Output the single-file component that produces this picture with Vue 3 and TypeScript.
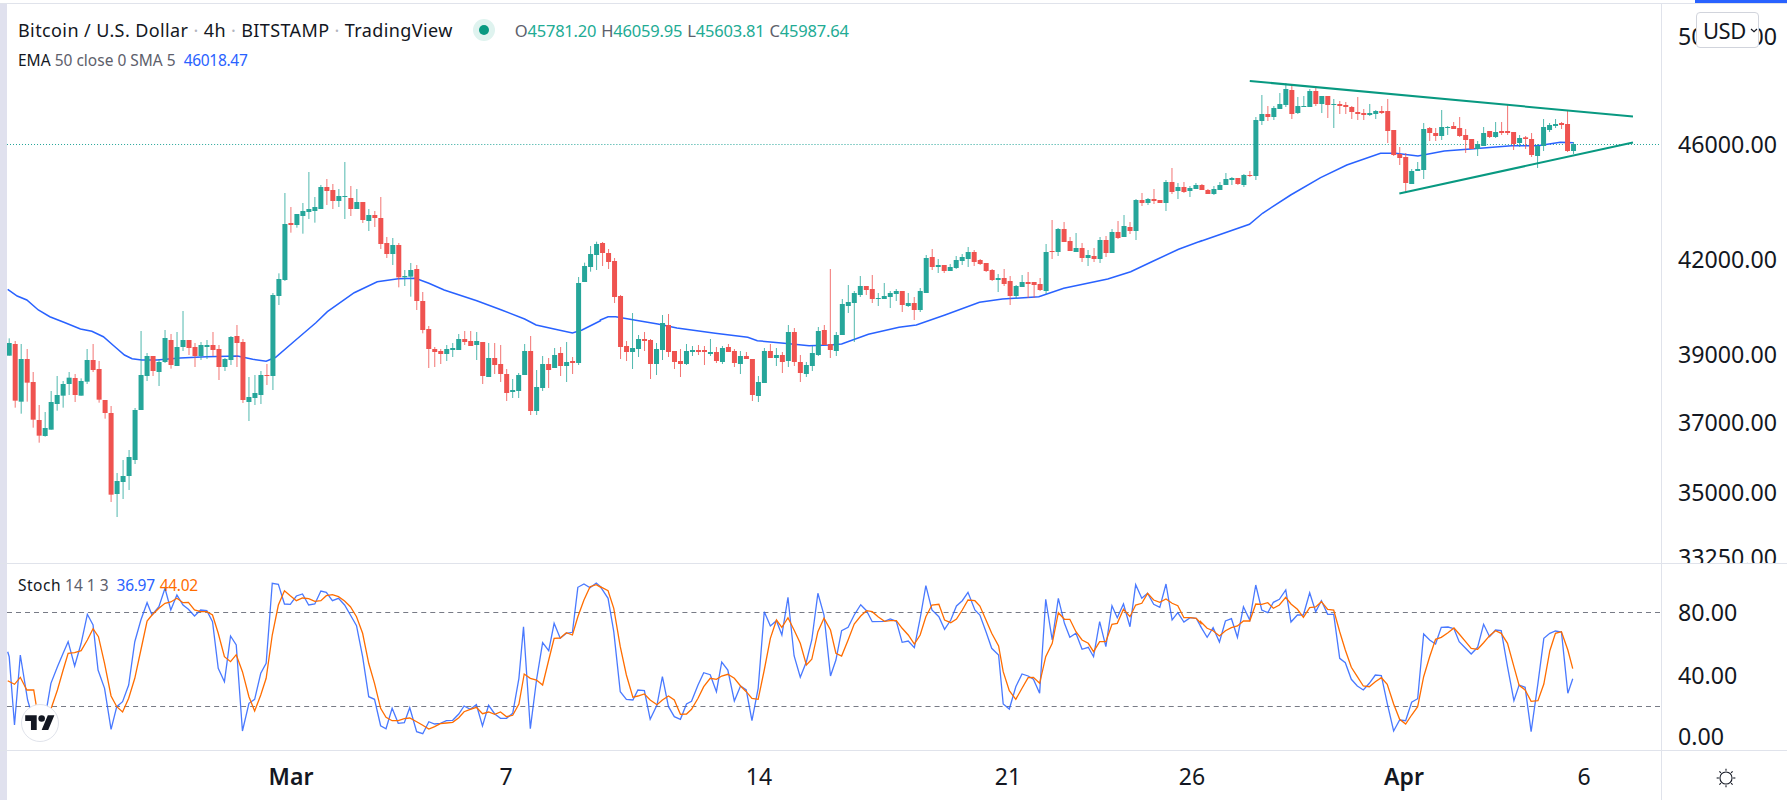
<script setup lang="ts">
interface Candle { x: number; up: boolean; top: number; h: number; wt: number; wh: number }
interface Seg { off: number; s: string }

const segs: Seg[] = [
  { off: 810, s: 'g 219 257 205 257;r 222 392 213 413;g 267 395 222 431;r 267 338 237 395;r 336 449 306 473;r 450 497 405 518;g 474 498 426 500;g 396 479 363 479;g 375 402 318 422;g 342 377 333 413;g 323 342 306 375;r 324 375 312 396;g 333 377 325 377;g 270 335 237 342;r 270 300 222 306;r 297 389 273 398;r 390 429 390 446;r 429 674 408 696;g 633 672 609 741;g 618 636 570 687;g 561 618 540 660;g 420 570 414 582;g 315 420 183 420;g 258 318 249 333;r 258 303 258 318;g 276 306 267 348;g 204 276 180 279;r 210 285 192 296;g 231 288 186 288;g 210 231 123 243;r 210 234 210 255;r 231 258 219 291;g 225 258 216 270;g 225 231 210 267;r 225 240 186 258;r 237 291 225 330;g 267 291 264 303;g 201 270 198 285;r 198 219 165 291;r 216 390 207 399;g 381 396 321 453;g 369 384 315 405;g 315 375 303 402;r 315 318 282 345;g 75 318 69 360;g 27 78 10 105' },
  { off: 0, s: 'g 672 840 579 843;r 669 675 621 698;g 642 675 642 683;g 633 648 609 701;g 627 636 516 657;g 621 633 591 668;g 561 627 555 627;r 561 573 537 615;r 570 603 552 627;g 588 603 567 621;g 588 591 486 657;r 594 627 558 648;g 606 627 567 627;r 606 660 606 669;g 645 663 627 693;r 645 654 633 681;r 654 732 591 747;r 729 762 711 774;g 735 762 714 795;r 735 832 729 862;g 828 832 810 858;g 810 830 789 890;r 807 903 795 930' },
  { off: 810, s: 'r 93 180 66 190;r 177 237 168 294;r 237 246 231 291;r 243 252 237 282;g 237 252 225 273;g 234 240 219 261;g 207 240 192 240;r 207 216 183 225;r 213 228 183 228;g 213 225 186 270;r 216 318 216 342;g 264 321 219 321;r 264 285 219 312;r 282 312 225 336;r 312 369 297 393;g 360 366 327 384;g 315 363 309 384;g 243 315 222 315;r 243 423 198 435;g 351 423 300 435;g 282 354 258 363;r 282 300 264 354;g 255 294 234 294;r 249 288 231 318;g 276 288 216 336;r 273 279 261 312;g 39 279 21 285' },
  { off: 0, s: 'g 798 846 788 846;g 762 801 738 815;g 732 765 725 810' },
  { off: 300, s: 'r 429 459 426 498;r 459 486 447 507;r 483 591 474 609;r 588 741 585 777;r 738 756 723 783;g 744 756 639 807;g 717 747 705 771;r 717 723 696 753;r 720 792 717 837;g 747 792 729 825;g 669 750 645 780;r 675 756 642 771;r 753 786 753 807;r 783 792 747 831;g 753 792 732 795;g 750 756 738 768;r 750 756 735 765;r 750 756 738 795;g 756 762 717 768;r 756 783 741 789;g 744 786 738 792;r 741 756 732 756;r 753 789 747 801;g 768 792 753 822;r 768 777 756 777;r 777 885 777 903;g 846 888 828 906;g 753 849 744 849;r 753 774 732 774;g 765 774 744 798;r 765 786 756 819;g 696 783 675 801;r 696 786 684 798;r 786 819 765 846;g 795 822 786 831;g 759 798 738 813;g 693 765 681 768;r 690 735 675 735;r 732 750 507 774;g 705 753 696 768;g 612 705 597 705;g 606 618 555 639;g 579 609 573 726;g 558 585 528 591;r 558 570 558 585;r 567 597 525 609;g 594 597 579 618;g 588 597 549 597;g 579 591 573 624;g 573 582 567 603;r 573 615 573 636;g 609 618 579 621;r 609 630 591 660;g 573 630 564 636;g 474 579 465 579;r 471 501 447 510;g 495 501 477 519;r 495 513 495 519;g 501 513 492 513;g 480 504 468 507;g 471 483 462 495;g 456 477 441 501;r 456 486 450 498;r 480 492 477 495;r 489 513 489 516;r 510 540 507 543;g 534 540 522 576;r 534 552 507 558;r 543 588 528 615;g 558 588 555 597;g 546 561 525 561;r 546 552 516 594;r 546 555 546 594;r 552 570 534 573;g 456 573 432 582;r 453 456 360 477;g 387 456 384 468;r 387 426 366 426;r 423 453 411 453;g 444 456 399 456;r 444 474 429 486;g 465 474 450 498;r 468 477 444 486;g 420 477 411 489;r 420 459 408 471;g 396 459 387 459;r 396 414 363 417;g 378 411 345 411;r 381 393 366 402;g 300 393 297 420;r 300 309 279 318;g 297 309 294 315;r 297 303 267 312;r 300 309 300 309;g 246 309 240 333;r 246 276 204 282;g 261 273 249 297;r 261 276 246 279;g 264 273 258 291;g 255 267 249 267' },
  { off: 0, s: 'r 555 570 552 570;r 570 582 567 582;g 567 582 558 585;g 555 570 546 570;g 537 555 519 555;g 534 540 531 555;r 534 552 534 555;g 525 555 522 561;r 525 528 513 531;g 360 528 351 540;g 342 363 285 375;r 342 351 318 363;g 324 351 318 360;g 312 327 279 327;g 267 315 249 321;r 270 342 258 357;g 318 339 291 342;g 318 321 288 321;g 273 321 267 321;r 273 312 258 318;g 288 312 288 339;r 288 315 288 354;g 312 315 297 384;r 312 318 303 342;r 315 321 306 342;r 321 336 318 357;r 336 342 291 360;r 339 345 327 360;g 339 345 312 348;g 333 342 330 357;r 333 339 318 342;r 333 393 297 429;r 390 465 390 468;r 462 474 441 495;r 471 549 459 579;g 513 552 507 552;g 507 513 486 513;g 387 510 369 537;r 384 399 381 423;r 399 408 384 423;g 381 408 330 420;g 381 384 378 405;r 378 387 366 387;r 384 408 351 411;r 405 420 387 459;r 417 447 417 447;g 432 447 423 468;g 399 438 381 438;r 393 411 393 414;g 396 411 366 414;r 393 399 366 405;r 393 399 312 405;r 396 432 396 450;g 414 429 405 441;r 412 417 408 447;r 417 465 399 471;g 438 468 432 504;g 381 438 357 453;g 375 390 369 396;g 372 378 357 384;r 369 375 366 387;r 372 453 333 456;g 432 453 426 462' },
]

const candles: Candle[] = []
for (const seg of segs) {
  for (const row of seg.s.split(';')) {
    const p = row.split(' ')
    const [bt, bb, wt, wb] = p.slice(1).map((n) => (Number(n) + seg.off) / 3)
    const i = candles.length
    candles.push({ x: 9.2 + 5.99 * i, up: p[0] === 'g', top: bt, h: Math.max(bb - bt, 1), wt, wh: wb - wt })
  }
}

function poly(xo: number, sx: number, yo: number, raw: string): string {
  const n = raw.trim().split(/[\s,]+/).map(Number)
  const out: string[] = []
  for (let i = 0; i < n.length; i += 2) {
    out.push(`${(xo + n[i] / sx).toFixed(1)},${(yo + n[i + 1] / 3).toFixed(1)}`)
  }
  return out.join(' ')
}

const ema = [
  poly(0, 2.613, 270, '20,58 45,78 70,90 100,120 130,140 170,158 210,177 240,184 270,200 300,230 325,255 345,266 370,270 410,270 470,264 540,260 620,258 660,268 695,274 720,262 770,212 825,158 855,125 925,68 985,35 1040,26 1085,25 1120,40 1160,60 1245,92 1310,120 1370,147 1400,165 1450,178 1495,189 1520,180 1568,152'),
  poly(600, 2.613, 100, '0,660 20,650 40,650 100,662 150,672 200,684 300,700 385,712 410,722 480,730 545,737 600,735 630,732 700,703 780,682 825,675 900,645 990,607 1050,597 1145,590 1210,565 1325,537 1385,515 1440,485 1510,448 1568,423'),
  poly(1200, 2.671, 0, '0,724 130,673 165,640 240,585 320,533 390,495 480,460 520,460 580,468 650,453 720,447 830,437 900,437 960,427 995,428'),
].join(' ')

const stochK = [
  poly(0, 2.613, 560, '20,275 24,290 38,495 53,285 72,420 85,470 100,520 118,470 133,370 150,320 165,280 178,245 195,318 212,250 228,163 243,195 256,330 273,385 290,508 305,440 320,425 336,375 352,245 368,180 384,128 397,165 415,140 431,85 446,150 462,105 478,135 492,148 508,168 524,150 540,152 555,185 570,325 586,365 602,228 617,255 633,513 650,430 665,418 681,340 695,310 711,70 727,73 743,132 758,133 774,108 790,102 806,135 822,132 838,93 852,97 868,122 884,115 900,135 915,165 931,197 947,290 963,410 978,418 994,497 1008,506 1024,445 1040,490 1056,488 1070,443 1088,515 1104,521 1120,485 1135,492 1150,490 1166,482 1182,481 1198,462 1212,438 1228,448 1244,434 1260,498 1276,436 1292,462 1307,475 1323,475 1339,460 1355,355 1367,200 1385,506 1401,360 1417,248 1433,272 1447,190 1463,235 1479,220 1495,217 1509,82 1525,72 1541,83 1557,69 1568,80'),
  poly(600, 2.613, 560, '0,80 20,115 35,215 52,395 68,418 85,420 98,390 115,392 130,478 148,435 162,350 178,440 193,470 209,478 225,432 238,424 255,375 270,338 287,344 303,395 317,306 333,330 350,423 366,378 381,390 396,482 412,385 428,155 444,198 460,182 474,225 490,112 506,287 522,352 538,305 552,240 568,100 584,165 601,348 615,300 630,212 647,202 663,165 680,134 695,152 710,185 742,184 757,177 773,184 788,247 804,243 820,263 835,175 850,77 866,150 884,170 899,208 915,180 930,138 945,122 960,97 978,150 991,165 1007,215 1022,265 1040,285 1052,432 1068,447 1085,380 1101,342 1117,348 1131,358 1147,400 1163,118 1180,240 1196,115 1212,190 1226,232 1242,220 1258,268 1274,262 1288,290 1304,185 1320,260 1336,137 1350,173 1366,132 1383,200 1398,74 1414,115 1429,100 1445,133 1461,142 1477,72 1493,180 1508,158 1524,186 1540,173 1556,175 1568,200'),
  poly(1200, 2.671, 560, '0,200 17,232 33,203 50,246 66,183 82,176 98,232 114,140 131,180 147,75 163,150 179,158 194,127 210,118 227,90 241,186 258,165 274,165 291,98 307,155 322,122 339,163 355,163 371,295 386,308 402,358 418,378 434,390 450,370 466,345 482,347 498,430 515,513 531,480 547,482 563,427 579,416 595,222 611,240 627,252 642,202 660,201 676,206 690,245 707,265 722,282 739,262 755,193 771,230 787,210 802,212 819,320 836,422 850,375 866,382 882,515 900,370 916,235 932,220 947,213 963,216 980,400 993,356'),
].join(' ')

const stochD = [
  poly(0, 2.613, 560, '20,362 38,373 53,352 70,390 88,390 95,440 110,500 125,470 135,440 150,390 165,330 178,280 195,278 212,272 228,240 243,206 257,230 273,310 290,408 305,440 320,456 336,415 352,355 368,270 384,183 397,165 415,145 431,130 446,126 462,115 478,128 492,127 508,150 524,155 540,155 555,165 570,220 586,290 602,305 617,284 633,335 650,410 665,453 681,405 695,355 711,225 727,135 743,92 758,107 774,122 790,114 806,116 822,124 838,122 852,107 868,104 884,110 900,123 915,140 931,170 947,220 963,310 978,370 994,445 1008,472 1024,482 1040,482 1056,476 1070,474 1088,485 1104,496 1120,507 1135,500 1150,491 1166,489 1182,487 1198,473 1212,455 1228,448 1244,442 1260,461 1276,456 1292,463 1307,456 1323,470 1339,466 1355,432 1369,342 1385,355 1401,360 1417,375 1433,300 1447,235 1463,234 1479,218 1495,225 1509,170 1525,120 1541,80 1557,74 1568,82'),
  poly(600, 2.613, 560, '0,80 20,92 35,145 52,260 68,345 85,412 98,408 115,402 130,420 148,434 162,420 178,408 193,420 209,463 225,462 238,448 255,415 270,380 287,355 303,358 317,348 333,343 350,355 366,378 381,395 396,415 412,418 428,330 444,235 460,180 474,202 490,173 506,210 522,250 538,315 552,298 568,215 584,175 601,210 615,280 630,288 647,240 663,192 680,168 695,152 710,155 725,170 742,184 757,182 773,182 788,205 804,225 820,252 835,225 850,170 866,135 884,133 899,180 915,188 930,177 945,150 960,120 978,122 991,138 1007,180 1022,220 1040,258 1052,335 1068,392 1085,418 1101,385 1117,353 1131,352 1147,370 1163,290 1180,250 1196,158 1212,178 1226,178 1242,215 1258,240 1274,250 1288,275 1304,245 1320,245 1336,193 1350,190 1366,148 1383,170 1398,135 1414,130 1429,100 1445,120 1461,127 1477,117 1493,130 1508,137 1524,173 1540,173 1556,175 1568,190'),
  poly(1200, 2.671, 560, '0,185 17,205 33,212 50,228 66,212 82,203 98,198 114,183 131,183 147,132 163,133 179,128 194,145 210,135 227,112 241,132 258,148 274,172 291,143 307,141 322,125 339,148 355,150 371,215 386,270 402,322 418,350 434,378 450,380 466,365 482,353 498,373 515,432 531,478 547,492 563,465 579,440 595,350 611,290 627,238 642,232 660,218 676,204 690,222 707,245 722,265 739,268 755,248 771,227 787,212 802,220 819,250 836,320 850,376 866,390 882,424 900,422 916,372 932,272 947,220 963,215 980,270 993,326'),
].join(' ')

const prices = [
  { t: '50000.00', y: 36 },
  { t: '46000.00', y: 144 },
  { t: '42000.00', y: 259 },
  { t: '39000.00', y: 354 },
  { t: '37000.00', y: 422 },
  { t: '35000.00', y: 492 },
  { t: '33250.00', y: 557 },
]
const stochTicks = [
  { t: '80.00', y: 612 },
  { t: '40.00', y: 675 },
  { t: '0.00', y: 736 },
]
const times = [
  { t: 'Mar', x: 291, b: true },
  { t: '7', x: 506, b: false },
  { t: '14', x: 759, b: false },
  { t: '21', x: 1008, b: false },
  { t: '26', x: 1192, b: false },
  { t: 'Apr', x: 1404, b: true },
  { t: '6', x: 1584, b: false },
]
const ohlc = [
  ['O', '45781.20'],
  ['H', '46059.95'],
  ['L', '45603.81'],
  ['C', '45987.64'],
]
const rays = [0, 45, 90, 135, 180, 225, 270, 315]
</script>

<template>
  <div class="app">
    <div class="topbar"><div class="topbar-blue"></div></div>
    <div class="pane pane-main">
      <div class="strip"></div>
      <div class="plot">
        <svg class="chart" viewBox="7 4 1653 559" preserveAspectRatio="none">
          <line x1="7" x2="1660" y1="144.5" y2="144.5" class="last-price" />
          <polyline :points="ema" class="ema" />
          <g v-for="(c, i) in candles" :key="i" :class="c.up ? 'up' : 'down'">
            <rect :x="c.x - 0.5" :y="c.wt" width="1" :height="c.wh" class="wick" />
            <rect :x="c.x - 2.5" :y="c.top" width="5" :height="c.h" />
          </g>
          <line x1="1249" y1="81" x2="1632" y2="116.5" class="trend" />
          <line x1="1398.5" y1="193.5" x2="1632" y2="142.5" class="trend" />
        </svg>
        <div class="legend">
          <div class="legend-title">
            <span>Bitcoin / U.S. Dollar</span><i>·</i><span>4h</span><i>·</i><span>BITSTAMP</span><i>·</i><span>TradingView</span>
            <b class="live"><b class="live-dot"></b></b>
            <span class="ohlc">
              <span v-for="row in ohlc" :key="row[0]" class="ohlc-item"><em>{{ row[0] }}</em>{{ row[1] }}</span>
            </span>
          </div>
          <div class="legend-ind">
            <span class="name">EMA</span> <span class="args">50 close 0 SMA 5</span>
            <span class="val blue">46018.47</span>
          </div>
        </div>
      </div>
      <div class="axis">
        <span v-for="p in prices" :key="p.t" class="tick" :style="{ top: p.y - 4 - 13 + 'px' }">{{ p.t }}</span>
        <div class="currency">USD<svg class="chev" viewBox="0 0 8 5" width="8" height="5"><path d="M1 1l3 2.6L7 1" fill="none" stroke="#131722" stroke-width="1.2" /></svg></div>
      </div>
    </div>
    <div class="pane pane-stoch">
      <div class="strip"></div>
      <div class="plot">
        <svg class="chart" viewBox="7 564 1653 186" preserveAspectRatio="none">
          <line x1="7" x2="1660" y1="612.5" y2="612.5" class="band" />
          <line x1="7" x2="1660" y1="706.5" y2="706.5" class="band" />
          <polyline :points="stochK" class="k" />
          <polyline :points="stochD" class="d" />
        </svg>
        <div class="legend-stoch">
          <span class="name">Stoch</span> <span class="args">14 1 3</span>
          <span class="val blue">36.97</span><span class="val orange">44.02</span>
        </div>
        <div class="tv-badge">
          <svg viewBox="0 0 36 28" width="30" height="23"><path d="M14 22H7V11H0V4h14v18zM28 22h-8l7.5-18h8L28 22z" fill="#131722" /><circle cx="20" cy="8" r="4" fill="#131722" /></svg>
        </div>
      </div>
      <div class="axis">
        <span v-for="p in stochTicks" :key="p.t" class="tick" :style="{ top: p.y - 564 - 13 + 'px' }">{{ p.t }}</span>
      </div>
    </div>
    <div class="pane pane-time">
      <div class="strip"></div>
      <div class="time-scale">
        <span v-for="l in times" :key="l.t" class="time" :class="{ strong: l.b }" :style="{ left: l.x - 7 + 'px' }">{{ l.t }}</span>
      </div>
      <div class="axis axis-corner">
        <svg viewBox="0 0 20 20" width="22" height="22">
          <circle cx="10" cy="10" r="5.5" fill="none" stroke="#131722" stroke-width="1" />
          <line v-for="r in rays" :key="r" x1="10" y1="1.5" x2="10" y2="3.5" stroke="#131722" stroke-width="1" :transform="`rotate(${r} 10 10)`" />
        </svg>
      </div>
    </div>
  </div>
</template>

<style scoped>
.app {
  width: 1787px;
  height: 800px;
  display: flex;
  flex-direction: column;
  background: #fff;
  color: #131722;
  font-family: "Noto Sans", "Open Sans", sans-serif;
  overflow: hidden;
}
.topbar {
  height: 4px;
  flex: none;
  box-sizing: border-box;
  border-bottom: 1px solid #e0e3eb;
  display: flex;
  justify-content: flex-end;
}
.topbar-blue { width: 92px; height: 3px; background: #2962ff; }
.pane { display: flex; flex: none; box-sizing: border-box; }
.pane-main { height: 560px; border-bottom: 1px solid #e0e3eb; }
.pane-stoch { height: 187px; border-bottom: 1px solid #e0e3eb; }
.pane-time { height: 49px; }
.strip { width: 7px; flex: none; background: #e0e1ee; }
.plot { position: relative; flex: 1; min-width: 0; overflow: hidden; }
.chart { display: block; width: 100%; height: 100%; }
.axis {
  position: relative;
  width: 126px;
  flex: none;
  box-sizing: border-box;
  border-left: 1px solid #e0e3eb;
  overflow: hidden;
}
.tick {
  position: absolute;
  left: 16px;
  line-height: 26px;
  font-size: 23.2px;
  white-space: nowrap;
}
.currency {
  position: absolute;
  left: 34px;
  top: 8px;
  width: 63px;
  height: 36px;
  box-sizing: border-box;
  border: 1px solid #d1d4dc;
  border-radius: 4px;
  background: #fff;
  display: flex;
  align-items: center;
  padding-left: 6px;
  font-size: 22px;
  letter-spacing: -0.5px;
}
.chev { margin-left: 4px; flex: none; }
.legend { position: absolute; left: 11px; top: 14px; }
.legend-title {
  display: flex;
  align-items: center;
  height: 24px;
  font-size: 18px;
  letter-spacing: 0.4px;
  white-space: nowrap;
}
.legend-title i { font-style: normal; color: #b2b5be; margin: 0 5px; }
.live {
  width: 22px;
  height: 22px;
  border-radius: 50%;
  background: #dff3ef;
  display: flex;
  align-items: center;
  justify-content: center;
  margin: 0 20px 0 20px;
}
.live-dot { width: 10px; height: 10px; border-radius: 50%; background: #089981; }
.ohlc { display: flex; gap: 5px; color: #22ab94; font-size: 16.5px; letter-spacing: -0.2px; }
.ohlc em { font-style: normal; color: #5d606b; }
.legend-ind {
  margin-top: 8px;
  font-size: 15.5px;
  line-height: 20px;
  white-space: nowrap;
}
.name { color: #131722; }
.args { color: #5d606b; }
.val { margin-left: 8px; letter-spacing: -0.3px; }
.blue { color: #2962ff; }
.orange { color: #ff6d00; }
.legend-stoch {
  position: absolute;
  left: 11px;
  top: 11px;
  font-size: 15.5px;
  line-height: 20px;
  white-space: nowrap;
}
.legend-stoch .name { letter-spacing: 0.5px; }
.legend-stoch .orange { margin-left: 5px; }
.last-price { stroke: #26a69a; stroke-width: 1; stroke-dasharray: 1 2; }
.ema { fill: none; stroke: #2962ff; stroke-width: 1.5; }
.up rect { fill: #26a69a; }
.down rect { fill: #ef5350; }
.wick { opacity: 0.8; }
.trend { stroke: #089981; stroke-width: 2; }
.band { stroke: #787b86; stroke-width: 1; stroke-dasharray: 5 4; }
.k { fill: none; stroke: #2962ff; stroke-width: 1.3; stroke-opacity: 0.85; }
.d { fill: none; stroke: #ff6d00; stroke-width: 1.3; }
.tv-badge {
  position: absolute;
  left: 14px;
  top: 140px;
  width: 36px;
  height: 36px;
  border-radius: 50%;
  border: 1.5px solid #e0e3eb;
  background: #fff;
  display: flex;
  align-items: center;
  justify-content: center;
}
.time-scale { position: relative; flex: 1; min-width: 0; }
.time {
  position: absolute;
  top: 10px;
  line-height: 30px;
  font-size: 23px;
  transform: translateX(-50%);
}
.strong { font-weight: 600; }
.axis-corner { display: flex; align-items: center; justify-content: center; padding-top: 5px; padding-left: 3px; }
</style>

<style>
body { background: #fff; }
</style>
